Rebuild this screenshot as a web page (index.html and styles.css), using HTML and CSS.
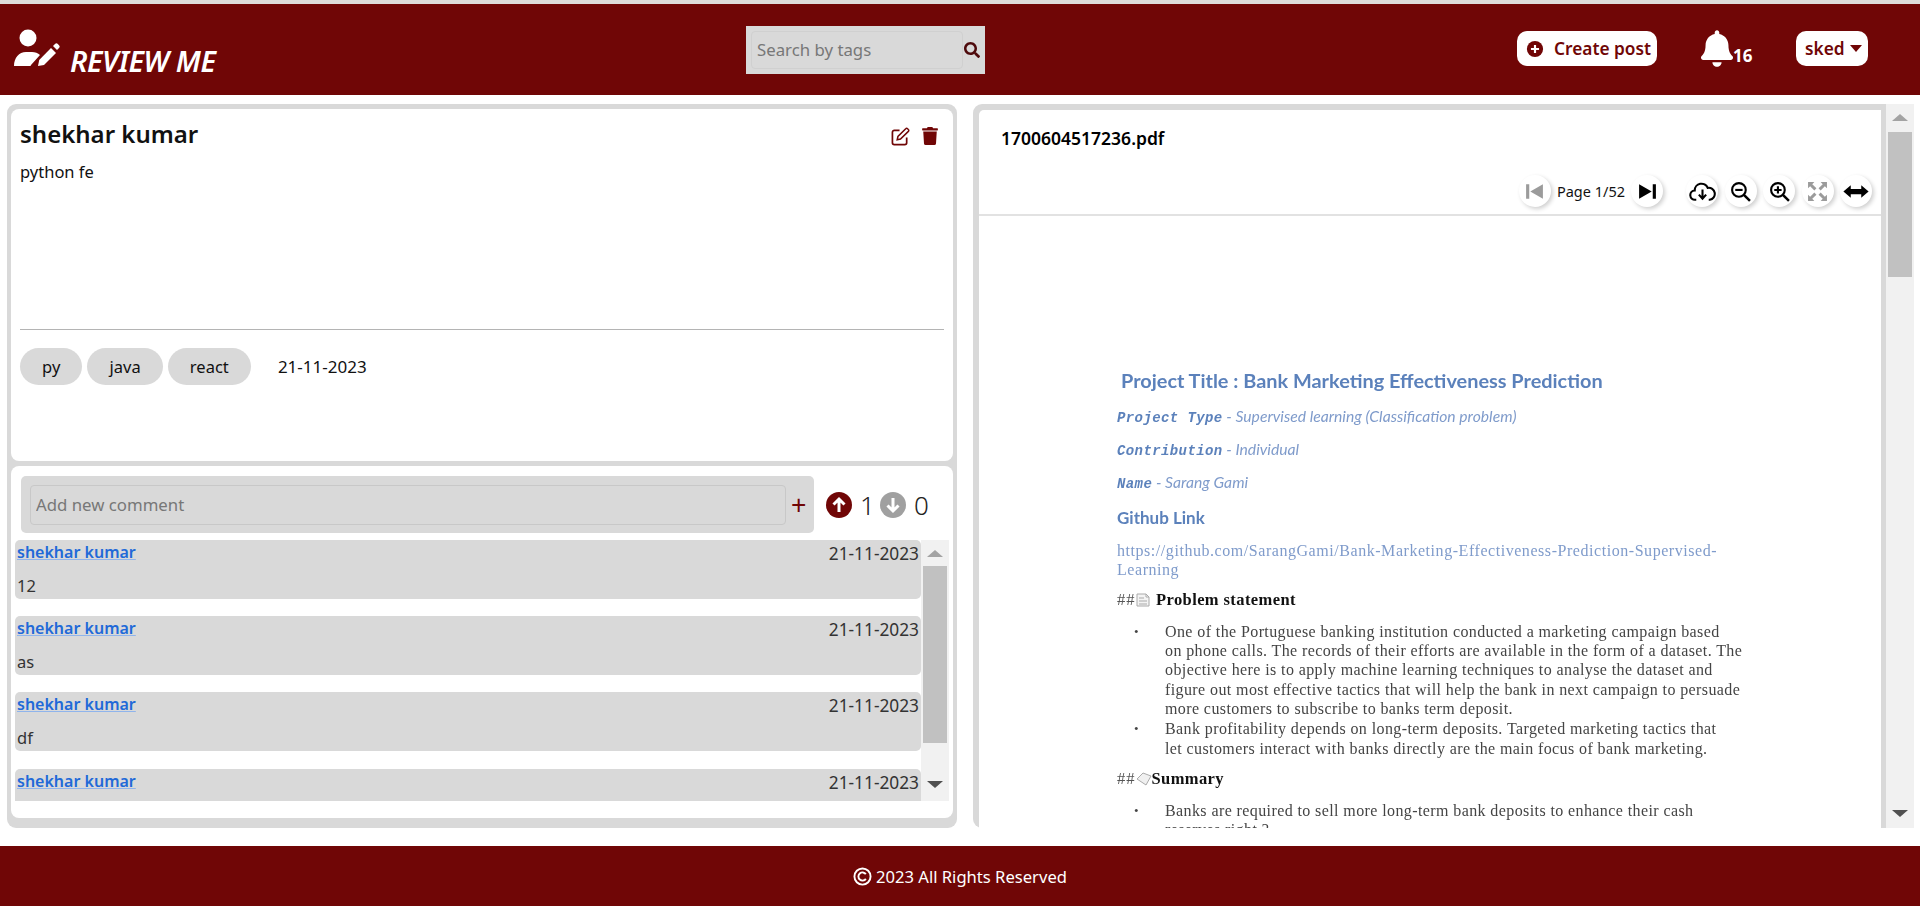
FILE: index.html
```html
<!DOCTYPE html>
<html lang="en">
<head>
<meta charset="utf-8">
<title>Review Me</title>
<link rel="stylesheet" href="styles.css">
</head>
<body>
<header class="topbar">
  <div class="brand">
    <svg class="brand-icon" viewBox="0 0 46 38"><circle cx="14" cy="9" r="8.500" fill="#fff"/><path d="M0 37c0-8 5-14 12-14h6c3 0 6 1 8 3L17 36l-.5 1z" fill="#fff"/><path d="M24 37l1.200-6L37 19l5 5L30 36z" fill="#fff"/><path d="M39 17l2-2a2 2 0 0 1 2.800 0l1.200 1.200a2 2 0 0 1 0 2.800l-2 2z" fill="#fff"/></svg>
    <span class="brand-name">REVIEW ME</span>
  </div>
  <div class="search">
    <input class="search-input" type="text" placeholder="Search by tags">
    <svg class="search-icon" viewBox="0 0 512 512"><path d="M505 442.700L405.300 343c-4.500-4.500-10.600-7-17-7H372c27.600-35.300 44-79.700 44-128C416 93.100 322.900 0 208 0S0 93.100 0 208s93.100 208 208 208c48.300 0 92.700-16.400 128-44v16.300c0 6.400 2.500 12.500 7 17l99.700 99.700c9.400 9.400 24.600 9.400 33.900 0l28.300-28.300c9.400-9.400 9.400-24.600.1-34zM208 336c-70.700 0-128-57.200-128-128 0-70.700 57.200-128 128-128 70.700 0 128 57.200 128 128 0 70.700-57.200 128-128 128z"/></svg>
  </div>
  <div class="top-actions">
    <button class="pill-btn create"><svg class="plus-circle" viewBox="0 0 20 20"><circle cx="10" cy="10" r="9" fill="#700606"/><path d="M10 5.500v9M5.500 10h9" stroke="#fff" stroke-width="2.400"/></svg>Create post</button>
    <div class="notify">
      <svg class="bell" viewBox="0 0 448 512"><path d="M224 512c35.320 0 63.970-28.650 63.970-64H160.030c0 35.350 28.650 64 63.970 64zm215.390-149.710c-19.320-20.760-55.470-51.990-55.470-154.290 0-77.700-54.480-139.900-127.940-155.160V32c0-17.670-14.320-32-31.980-32s-31.980 14.330-31.980 32v20.840C118.560 68.100 64.080 130.300 64.080 208c0 102.300-36.150 133.530-55.470 154.290-6 6.450-8.660 14.160-8.610 21.710.11 16.400 12.980 32 32.100 32h383.800c19.120 0 32-15.600 32.100-32 .05-7.550-2.610-15.270-8.610-21.710z"/></svg>
      <span class="notify-count">16</span>
    </div>
    <button class="pill-btn user">sked<span class="caret"></span></button>
  </div>
</header>

<main class="content">
  <section class="left">
    <article class="post">
      <div class="post-head">
        <h1 class="post-title">shekhar kumar</h1>
        <div class="post-tools">
          <svg class="edit-icon" viewBox="0 0 20 20"><path d="M9 3.500H3.500a2 2 0 0 0-2 2v11a2 2 0 0 0 2 2h11a2 2 0 0 0 2-2V11" fill="none" stroke="#700606" stroke-width="1.800"/><path d="M6.500 13.500l.8-3.500L15.500 1.800a1.300 1.300 0 0 1 1.900 0l.9.9a1.300 1.300 0 0 1 0 1.900L10 12.700z" fill="none" stroke="#700606" stroke-width="1.600"/></svg>
          <svg class="trash-icon" viewBox="0 0 448 512"><path d="M432 32H312l-9.400-18.700A24 24 0 0 0 281.100 0H166.800a23.720 23.720 0 0 0-21.400 13.300L136 32H16A16 16 0 0 0 0 48v32a16 16 0 0 0 16 16h416a16 16 0 0 0 16-16V48a16 16 0 0 0-16-16zM53.200 467a48 48 0 0 0 47.900 45h245.800a48 48 0 0 0 47.900-45L416 128H32z"/></svg>
        </div>
      </div>
      <p class="post-body">python fe</p>
      <hr class="post-rule">
      <div class="post-meta">
        <span class="tag">py</span>
        <span class="tag">java</span>
        <span class="tag">react</span>
        <span class="post-date">21-11-2023</span>
      </div>
    </article>

    <section class="discussion">
      <div class="composer">
        <div class="comment-box">
          <input class="comment-input" type="text" placeholder="Add new comment">
          <span class="comment-add">+</span>
        </div>
        <div class="votes">
          <svg class="vote" viewBox="0 0 26 26"><circle cx="13" cy="13" r="13" fill="#700606"/><path d="M13 20V7M7.500 12.500L13 7l5.500 5.500" fill="none" stroke="#fff" stroke-width="3"/></svg>
          <span class="vote-count first">1</span>
          <svg class="vote" viewBox="0 0 26 26"><circle cx="13" cy="13" r="13" fill="#a0a0a0"/><path d="M13 6v13M7.500 13.500L13 19l5.500-5.500" fill="none" stroke="#fff" stroke-width="3"/></svg>
          <span class="vote-count">0</span>
        </div>
      </div>
      <div class="comments-wrap">
        <div class="comments">
          <div class="comment"><div class="comment-top"><a class="comment-user">shekhar kumar</a><span class="comment-date">21-11-2023</span></div><div class="comment-text">12</div></div>
          <div class="comment"><div class="comment-top"><a class="comment-user">shekhar kumar</a><span class="comment-date">21-11-2023</span></div><div class="comment-text">as</div></div>
          <div class="comment"><div class="comment-top"><a class="comment-user">shekhar kumar</a><span class="comment-date">21-11-2023</span></div><div class="comment-text">df</div></div>
          <div class="comment"><div class="comment-top"><a class="comment-user">shekhar kumar</a><span class="comment-date">21-11-2023</span></div></div>
        </div>
        <div class="scrollbar small">
          <span class="arrow up"></span>
          <span class="thumb"></span>
          <span class="arrow down"></span>
        </div>
      </div>
    </section>
  </section>

  <section class="right">
    <div class="viewer">
      <div class="viewer-head">
        <div class="file-name">1700604517236.pdf</div>
        <div class="toolbar">
          <span class="tool muted"><svg viewBox="0 0 20 20"><path d="M2 3h3v14H2zM18 3v14L6 10z"/></svg></span>
          <span class="page-label">Page 1/52</span>
          <span class="tool"><svg viewBox="0 0 20 20"><path d="M2 3v14l12-7zM15 3h3v14h-3z"/></svg></span>
          <span class="tool cloud"><svg viewBox="0 0 26 20"><path d="M7 18H6a4.500 4.500 0 0 1-.5-9A6.500 6.500 0 0 1 18 6.500a5.800 5.800 0 0 1 2 11.500h-1" fill="none" stroke="#000" stroke-width="2"/><path d="M13 8v8M9.500 13l3.500 4 3.500-4" fill="none" stroke="#000" stroke-width="2"/></svg></span>
          <span class="tool"><svg viewBox="0 0 20 20"><circle cx="8.500" cy="8.500" r="6.500" fill="none" stroke="#000" stroke-width="2"/><path d="M13 13l6 6" stroke="#000" stroke-width="2.400"/><path d="M5 8.500h7" stroke="#000" stroke-width="2"/></svg></span>
          <span class="tool"><svg viewBox="0 0 20 20"><circle cx="8.500" cy="8.500" r="6.500" fill="none" stroke="#000" stroke-width="2"/><path d="M13 13l6 6" stroke="#000" stroke-width="2.400"/><path d="M5 8.500h7M8.500 5v7" stroke="#000" stroke-width="2"/></svg></span>
          <span class="tool muted"><svg viewBox="0 0 20 20"><path d="M1 1h6L5 3l4 4-2 2-4-4-2 2zM19 1v6l-2-2-4 4-2-2 4-4-2-2zM1 19v-6l2 2 4-4 2 2-4 4 2 2zM19 19h-6l2-2-4-4 2-2 4 4 2-2z"/></svg></span>
          <span class="tool wide"><svg viewBox="0 0 24 20"><path d="M0 10l7-6v3.500h10V4l7 6-7 6v-3.500H7V16z"/></svg></span>
        </div>
      </div>
      <div class="pdf">
        <h2 class="pdf-title">Project Title : Bank Marketing Effectiveness Prediction</h2>
        <p class="pdf-line"><b class="pdf-key">Project Type</b> - Supervised learning (Classification problem)</p>
        <p class="pdf-line"><b class="pdf-key">Contribution</b> - Individual</p>
        <p class="pdf-line"><b class="pdf-key">Name</b> - Sarang Gami</p>
        <h3 class="pdf-sub">Github Link</h3>
        <p class="pdf-link">https://github.com/SarangGami/Bank-Marketing-Effectiveness-Prediction-Supervised-<br>Learning</p>
        <h4 class="pdf-head"><span class="hash">##</span><svg class="mini" viewBox="0 0 16 14"><path d="M1 1h9l3 3v9H1zM3 5h5M3 8h8M3 11h8M10 1v3h3" fill="#f4f4f4" stroke="#aaa"/></svg> Problem statement</h4>
        <ul class="pdf-list">
          <li>One of the Portuguese banking institution conducted a marketing campaign based<br>on phone calls. The records of their efforts are available in the form of a dataset. The<br>objective here is to apply machine learning techniques to analyse the dataset and<br>figure out most effective tactics that will help the bank in next campaign to persuade<br>more customers to subscribe to banks term deposit.</li>
          <li>Bank profitability depends on long-term deposits. Targeted marketing tactics that<br>let customers interact with banks directly are the main focus of bank marketing.</li>
        </ul>
        <h4 class="pdf-head summary"><span class="hash">##</span><svg class="mini" viewBox="0 0 16 14"><path d="M1 7l6-6 8 3-5 9z" fill="#f0f0f0" stroke="#aaa"/></svg>Summary</h4>
        <ul class="pdf-list">
          <li>Banks are required to sell more long-term bank deposits to enhance their cash<br>reserves right ?</li>
        </ul>
      </div>
    </div>
    <div class="scrollbar large">
      <span class="arrow up"></span>
      <span class="thumb"></span>
      <span class="arrow down"></span>
    </div>
  </section>
</main>

<footer class="footer">
  <svg class="copy" viewBox="0 0 20 20"><circle cx="10" cy="10" r="8.500" fill="none" stroke="#fff" stroke-width="2"/><path d="M13.500 7.500a4.300 4.300 0 1 0 0 5" fill="none" stroke="#fff" stroke-width="2"/></svg>
  <span>2023 All Rights Reserved</span>
</footer>
</body>
</html>
```

FILE: styles.css
```css
* { box-sizing: border-box; }
html, body { margin: 0; height: 100%; }
body {
  display: flex;
  flex-direction: column;
  height: 906px;
  overflow: hidden;
  border-top: 4px solid #dedcda;
  background: #fff;
  color: #111;
  font-family: "Noto Sans", "Open Sans", sans-serif;
  font-size: 16px;
}

/* Header */
.topbar {
  flex: 0 0 91px;
  display: grid;
  grid-template-columns: 746px 239px 1fr;
  align-items: center;
  background: #700606;
}
.brand { display: flex; align-items: flex-end; padding-left: 14px; height: 62px; }
.brand-icon { width: 46px; height: 38px; margin-bottom: 14px; }
.brand-name {
  margin-left: 10px;
  margin-bottom: 1px;
  color: #fff;
  font-size: 29px;
  font-weight: 600;
  font-style: italic;
  letter-spacing: -.4px;
  line-height: 38px;
  white-space: nowrap;
}
.search {
  display: flex;
  align-items: center;
  height: 48px;
  padding: 5px;
  background: #d9d9d9;
}
.search-input {
  width: 212px;
  height: 38px;
  padding: 0 5px;
  border: 1px solid #d0d0d0;
  border-radius: 4px;
  background: #d9d9d9;
  font: 16.800px "Noto Sans", sans-serif;
}
.search-input::placeholder, .comment-input::placeholder { color: #777; opacity: 1; }
.search-icon { width: 20px; height: 20px; margin-left: 1px; fill: #4e0a0c; }
.top-actions { display: flex; align-items: center; padding: 0 0 2px 532px; }
.pill-btn {
  display: flex;
  align-items: center;
  height: 35px;
  border: 0;
  border-radius: 10px;
  background: #fff;
  color: #700606;
  font: 600 17.300px "Noto Sans", sans-serif;
}
.create { width: 140px; padding: 0 0 0 9px; gap: 10px; white-space: nowrap; }
.plus-circle { width: 18px; height: 18px; flex: none; }
.notify { display: flex; align-items: flex-end; margin-left: 44px; width: 95px; }
.bell { width: 32px; height: 37px; fill: #fff; }
.notify-count { color: #fff; font-size: 17px; font-weight: 700; line-height: 20px; margin-bottom: 1px; }
.user { width: 72px; padding: 0 0 0 9px; gap: 5px; }
.caret { border: 6px solid transparent; border-top: 7px solid #700606; border-bottom: 0; }

/* Main */
.content {
  flex: 1;
  min-height: 0;
  display: flex;
  gap: 16px;
  padding: 9px 6px 18px 7px;
}
.left {
  flex: 0 0 950px;
  display: flex;
  flex-direction: column;
  gap: 5px;
  padding: 5px 4px 10px;
  border-radius: 9px;
  background: #d9d9d9;
}
.post {
  flex: 0 0 352px;
  padding: 0 9px;
  border-radius: 8px;
  background: #fff;
}
.post-head { display: flex; justify-content: space-between; align-items: center; height: 50px; }
.post-title { margin: 0; font-size: 24px; font-weight: 600; line-height: 34px; }
.post-tools { display: flex; align-items: center; gap: 12px; padding-right: 6px; padding-top: 4px; }
.edit-icon { width: 19px; height: 19px; }
.trash-icon { width: 16px; height: 18px; fill: #700606; }
.post-body { margin: 1px 0 0; font-size: 16.500px; line-height: 24px; height: 169px; }
.post-rule { height: 1px; margin: 0; border: 0; background: #b4b4b4; }
.post-meta { display: flex; align-items: center; gap: 5px; margin-top: 18px; }
.tag {
  display: flex;
  justify-content: center;
  align-items: center;
  height: 37px;
  border-radius: 18.500px;
  background: #d9d9d9;
  font-size: 16.500px;
  padding: 0 22.100px;
}
.post-date { margin-left: 22px; font-size: 17px; }

.discussion {
  flex: 1;
  min-height: 0;
  padding: 10px 0 0 4px;
  border-radius: 8px;
  background: #fff;
}
.composer { display: flex; align-items: center; padding-left: 6px; }
.comment-box {
  flex: 0 0 793px;
  display: flex;
  align-items: center;
  height: 57px;
  padding-left: 9px;
  border-radius: 5px;
  background: #d9d9d9;
}
.comment-input {
  width: 756px;
  height: 40px;
  padding: 0 5px;
  border: 1px solid #c8c8c8;
  border-radius: 4px;
  background: #d9d9d9;
  font: 16.800px "Noto Sans", sans-serif;
}
.comment-add { margin-left: 5px; color: #700606; font-size: 27px; line-height: 1; }
.votes { display: flex; align-items: center; margin-left: 12px; }
.vote { width: 26px; height: 26px; }
.vote-count { margin-left: 8px; font-size: 26px; font-weight: 300; color: #222; line-height: 1; }
.vote-count.first { width: 20px; }
.comments-wrap { display: flex; height: 261px; margin-top: 7px; }
.comments { width: 906px; height: 261px; overflow: hidden; }
.comment {
  height: 59px;
  margin-bottom: 17.200px;
  padding: 0 2px;
  border-radius: 5px;
  background: #d9d9d9;
}
.comment-top { display: flex; justify-content: space-between; height: 34px; align-items: flex-start; }
.comment-user {
  color: #2169d8;
  font-size: 16px;
  font-weight: 600;
  line-height: 24px;
  text-decoration: underline;
  text-decoration-color: #8fb4ec;
  text-underline-offset: 1px;
}
.comment-date { color: #333; font-size: 17.300px; line-height: 28px; }
.comment-text { color: #333; font-size: 16.500px; line-height: 24px; }

/* Fake scrollbars */
.scrollbar {
  display: flex;
  flex-direction: column;
  align-items: center;
  background: #f1f1f1;
}
.small { flex: 0 0 28px; height: 261px; }
.large { flex: 0 0 28px; }
.arrow { flex: none; width: 0; height: 0; border: 8px solid transparent; }
.arrow.up { border-top: 0; border-bottom: 7px solid #a3a3a3; }
.arrow.down { border-bottom: 0; border-top: 7px solid #505050; }
.thumb { flex: none; background: #c1c1c1; width: 24px; }
.small .arrow.up { margin: 10px 0 9px; }
.small .thumb { height: 177px; }
.small .arrow.down { margin-top: 38px; }
.large .arrow.up { margin: 10px 0 11px; }
.large .thumb { height: 145px; }
.large .arrow.down { margin-top: 533px; }

/* PDF viewer */
.right { flex: 0 0 941px; display: flex; min-height: 0; overflow: hidden; }
.viewer {
  flex: 1;
  min-width: 0;
  padding: 6px 5px 0 6px;
  border-radius: 9px 0 0 9px;
  background: #d9d9d9;
  display: flex;
  flex-direction: column;
}
.viewer-head {
  flex: 0 0 106px;
  padding: 16px 0 0 22px;
  background: #fff;
  border-radius: 5px 0 0 0;
  border-bottom: 2px solid #e2e2e2;
}
.file-name { font-size: 17.500px; font-weight: 600; line-height: 24px; color: #000; }
.toolbar { display: flex; justify-content: flex-end; align-items: center; margin-top: 25px; padding-right: 9px; }
.tool {
  display: flex;
  justify-content: center;
  align-items: center;
  width: 32px;
  height: 32px;
  margin-left: 6.500px;
  border-radius: 50%;
  background: #fff;
  box-shadow: 2px 2px 4px #d0d0d0;
}
.tool svg { width: 21px; height: 21px; }
.tool.muted { fill: #9b9b9b; }
.tool.cloud { margin-left: 23px; }
.tool.cloud svg { width: 27px; }
.tool.wide svg { width: 26px; }
.page-label { margin: 0 0 0 6px; font-size: 14.500px; color: #111; }
.page-label + .tool { margin-left: 6px; }
.pdf {
  flex: 1;
  min-height: 0;
  overflow: hidden;
  padding: 151px 0 0 138px;
  background: #fff;
  font-family: "Liberation Serif", serif;
  filter: blur(.25px);
}
.pdf-title {
  margin: 0 0 0 4px;
  color: #5b81bb;
  font: 700 19.900px/26px Lato, sans-serif;
}
.pdf-line {
  margin: 10px 0 0;
  color: #7f9bcb;
  font: italic 15.700px/23px Lato, sans-serif;
}
.pdf-title + .pdf-line { margin-top: 11.500px; }
.pdf-key { color: #5b81bb; font: italic 700 14px "Liberation Mono", monospace; letter-spacing: .4px; }
.pdf-sub { margin: 12px 0 0; color: #5b81bb; font: 700 17px/24px Lato, sans-serif; }
.pdf-link { margin: 11.500px 0 0; color: #7f9bcb; font-size: 16px; line-height: 19px; letter-spacing: .55px; }
.pdf-head {
  display: flex;
  align-items: center;
  margin: 10.500px 0 0;
  color: #111;
  font-size: 16.500px;
  font-weight: 700;
  line-height: 20px;
  letter-spacing: .4px;
  white-space: pre;
}
.hash { color: #555; font-weight: 400; letter-spacing: 1px; }
.mini { width: 16px; height: 14px; }
.pdf-list {
  margin: 12.400px 0 0;
  padding: 0 0 0 17px;
  list-style: none;
  color: #444;
  font-size: 16px;
  line-height: 19.200px;
  letter-spacing: .4px;
  white-space: nowrap;
}
.pdf-list li { display: flex; }
.pdf-list li + li { margin-top: 1.500px; }
.pdf-list li::before { content: "\2022"; flex: 0 0 31px; font-size: 13px; }
.pdf-head.summary { margin-top: 10.700px; }

/* Footer */
.footer {
  flex: 0 0 60px;
  display: flex;
  justify-content: center;
  align-items: center;
  gap: 4px;
  background: #700606;
  color: #fff;
  font-size: 16.600px;
}
.copy { width: 19px; height: 19px; }
```
